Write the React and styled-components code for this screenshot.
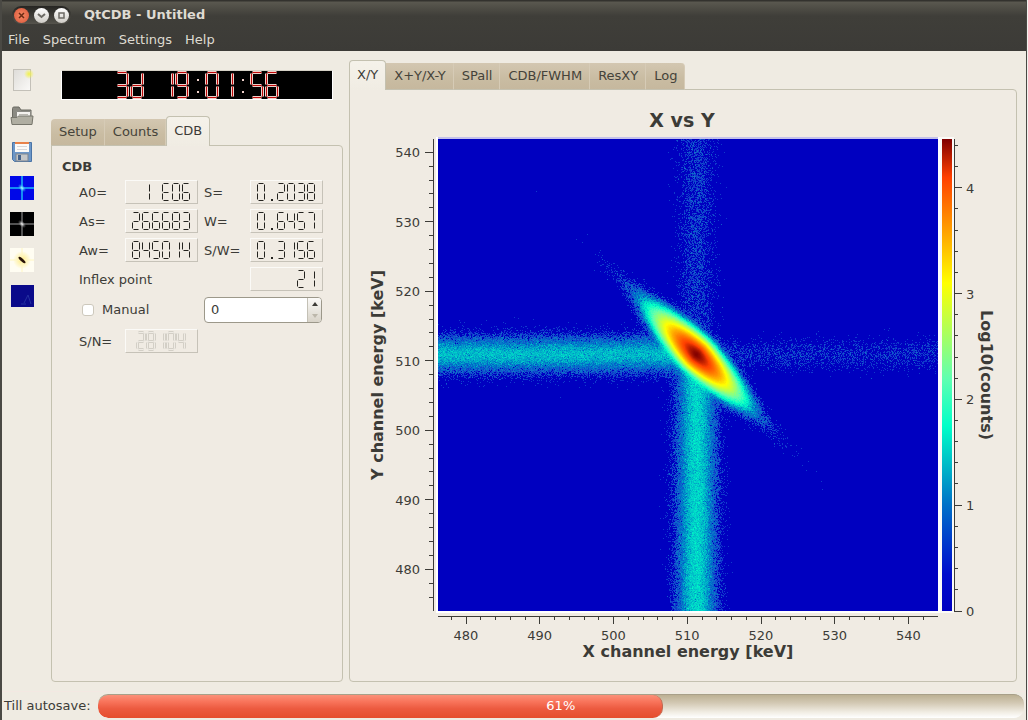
import React, { useEffect, useRef } from "react";
import styled, { createGlobalStyle, css } from "styled-components";

const ink = "#3c3b37";
const panelLine = "#c4c1b0";

const GlobalStyle = createGlobalStyle`
  * { box-sizing: border-box; }
  body {
    margin: 0;
    background: #f4f2ee;
    color: ${ink};
    font: 13px/16px "DejaVu Sans", sans-serif;
  }
  button, input { font: inherit; color: inherit; }
`;

/* ---------- window frame ---------- */

const Window = styled.div`
  min-height: 100vh;
  margin-right: 1px;
  display: flex;
  flex-direction: column;
  background: #efebe2;
  border: 1px solid #4a4944;
  border-width: 0 1px 0 2px;
`;

const Header = styled.header`
  background: linear-gradient(#33322e 0, #33322e 1px, #5a584f 2px, #3f3e39 16px, #3c3b37 100%);
  color: #dfdbd2;
  height: 51px;
  padding-top: 3px;
`;

const TitleBar = styled.div`
  display: flex;
  align-items: center;
  gap: 13px;
  height: 24px;
  padding-left: 10px;
`;

const WindowButtons = styled.div`
  display: flex;
  align-items: center;
  gap: 5px;
  height: 18px;
  padding: 0 2px;
  border-radius: 9px;
  background: linear-gradient(#262522, #55534c);
`;

const WindowButton = styled.button`
  width: 15px;
  height: 15px;
  padding: 0;
  display: grid;
  place-items: center;
  border: 0;
  border-radius: 50%;
  background: ${(p) => (p.$close ? "radial-gradient(#f68a64, #d9553a)" : "linear-gradient(#ffffff, #cfccc6)")};
`;

const Title = styled.h1`
  margin: 0;
  font-size: 13px;
  line-height: 16px;
`;

const MenuBar = styled.nav`
  display: flex;
  gap: 13px;
  padding: 5px 6px;
`;

const MenuButton = styled.button`
  padding: 0;
  border: 0;
  background: none;
  line-height: 16px;
`;

const Body = styled.main`
  flex: 1;
  display: flex;
  padding: 9px 9px 9px 0;
`;

/* ---------- tool bar ---------- */

const ToolBar = styled.div`
  flex: 0 0 49px;
  display: flex;
  flex-direction: column;
  gap: 12px;
  padding: 8px 0 0 8px;
`;

const ToolButton = styled.button`
  width: 24px;
  height: 24px;
  padding: 0;
  border: 0;
  background: none;
  svg { display: block; }
`;

/* ---------- tabs and panels ---------- */

const Column = styled.section`
  display: flex;
  flex-direction: column;
  flex: ${(p) => (p.$wide ? "1" : "0 0 292px")};
  margin-left: ${(p) => (p.$wide ? "6px" : "0")};
  min-width: 0;
`;

const TabBar = styled.div`
  display: flex;
  align-items: flex-end;
  height: 30px;
  position: relative;
  margin-bottom: -1px;
`;

const Tab = styled.button`
  height: 27px;
  padding: 0 7px 0 8px;
  border: 0;
  border-right: 1px solid #d6cbb6;
  background: linear-gradient(#d3c7b1, #c9bca2 60%, #c6b89e);
  border-bottom: 1px solid ${panelLine};
  color: #45433a;
  white-space: nowrap;
  &:first-child { border-top-left-radius: 4px; }
  &:last-child { border-top-right-radius: 4px; }
  ${(p) =>
    p.$active &&
    css`
      height: 30px;
      border: 1px solid ${panelLine};
      border-bottom: 0;
      border-radius: 4px 4px 0 0;
      padding: 0 7px 1px;
      background: linear-gradient(#f5f2ea, #f0ece3);
      color: ${ink};
    `}
`;

const Panel = styled.div`
  flex: 1;
  border: 1px solid ${panelLine};
  border-radius: 0 4px 4px 4px;
  background: #f0ebe3;
`;

/* ---------- left panel ---------- */

const Clock = styled.div`
  display: grid;
  place-items: center;
  height: 30px;
  margin: 10px 10px 16px;
  background: #000;
  border: 1px solid #fff;
  border-top-color: #d5d1c6;
`;

const Form = styled.form`
  padding: 12px 10px;
`;

const GroupTitle = styled.h2`
  margin: 0 0 5px;
  padding-top: 1px;
  font-size: 13px;
  line-height: 16px;
`;

const Fields = styled.div`
  display: grid;
  grid-template-columns: 40px 73px 40px 73px;
  grid-auto-rows: minmax(24px, auto);
  align-items: center;
  gap: 5px 6px;
  padding-left: 17px;
`;

const Label = styled.span`
  grid-column: span ${(p) => p.$span || 1};
  padding-top: 2px;
  white-space: nowrap;
`;

const Readout = styled.output`
  display: grid;
  place-items: center;
  height: 24px;
  border: 1px solid;
  border-color: #fbfaf7 #c6c2b8 #c6c2b8 #fbfaf7;
`;

const CheckLabel = styled.label`
  grid-column: span 2;
  display: flex;
  align-items: center;
  gap: 8px;
  height: 28px;
  padding-left: 3px;
`;

const CheckBox = styled.input`
  appearance: none;
  width: 12px;
  height: 12px;
  margin: 0;
  border: 1px solid #cdc8bc;
  border-radius: 3px;
  background: #fff;
`;

const Spin = styled.div`
  grid-column: span 2;
  display: flex;
  width: 118px;
  height: 26px;
  border: 1px solid #9c988a;
  border-radius: 4px;
  background: #fff;
  overflow: hidden;
`;

const SpinInput = styled.input`
  flex: 1;
  min-width: 0;
  padding: 0 6px;
  border: 0;
  background: none;
`;

const SpinButtons = styled.div`
  display: grid;
  grid-template-rows: 1fr 1fr;
  width: 14px;
  border-left: 1px solid #c4c1b6;
  background: linear-gradient(#fbfaf8, #d8d3c8);
`;

const SpinButton = styled.button`
  display: grid;
  place-items: center;
  padding: 0;
  border: 0;
  background: none;
  color: ${(p) => (p.disabled ? "#bcb7ab" : ink)};
`;

/* ---------- chart ---------- */

const Chart = styled.figure`
  height: 100%;
  margin: 0;
  padding: 18px 20px 19px 18px;
  display: grid;
  grid-template-columns: 20px 50px minmax(0, 1fr) 16px 24px 18px;
  grid-template-rows: 31px minmax(300px, 1fr) 31px 20px;
  grid-template-areas:
    ".      .     title .     .     ."
    "ytitle yaxis plot  bar   zaxis ztitle"
    ".      .     xaxis .     .     ."
    ".      .     xtitle .    .     .";
`;

const ChartTitle = styled.figcaption`
  grid-area: title;
  text-align: center;
  font-size: 19px;
  line-height: 24px;
  font-weight: bold;
  padding-right: 12px;
`;

const AxisTitle = styled.div`
  grid-area: ${(p) => p.$area};
  font-size: 16px;
  line-height: 20px;
  font-weight: bold;
  text-align: center;
  white-space: nowrap;
  ${(p) => p.$area !== "xtitle" && css`writing-mode: vertical-rl;`}
  ${(p) => p.$area === "ytitle" && css`transform: rotate(180deg);`}
`;

const Axis = styled.svg`
  grid-area: ${(p) => p.$area};
  width: 100%;
  height: 100%;
  overflow: visible;
  line { stroke: ${ink}; stroke-width: 1; shape-rendering: crispEdges; }
  text { fill: ${ink}; font: 13px "DejaVu Sans", sans-serif; }
`;

const Heatmap = styled.canvas`
  grid-area: plot;
  display: block;
  width: 100%;
  height: 100%;
  contain: size;
  box-shadow: 0 -2px 0 #c3c0ea, 0 0 0 2px #fff;
`;

const ColorBar = styled.div`
  grid-area: bar;
  margin: 0 2px 0 4px;
  box-shadow: 0 0 0 2px #fbfaf7;
  background: ${(p) => p.$fill};
`;

/* ---------- footer ---------- */

const Footer = styled.footer`
  display: flex;
  align-items: center;
  gap: 7px;
  height: 30px;
  padding: 0 2px 2px;
  border-top: 1px solid #f3e8e2;
`;

const Progress = styled.div`
  flex: 1;
  display: grid;
  height: 24px;
  border-radius: 10px;
  overflow: hidden;
  border-top: 1px solid #a89f89;
  background: linear-gradient(#bcb093, #d3c9b4 35%, #f1ede4 75%, #fff);
`;

const ProgressFill = styled.div`
  grid-area: 1 / 1;
  border-radius: 10px;
  border-right: 1px solid #c06a50;
  background: linear-gradient(#fb9079, #f8735a 30%, #ec5a3f 60%, #e54d2d);
`;

const ProgressText = styled.span`
  grid-area: 1 / 1;
  place-self: center;
  color: #fff;
`;

/* ---------- seven segment display ---------- */

const SEGMENTS = {
  0: "abcdef", 1: "bc", 2: "abged", 3: "abgcd", 4: "fgbc", 5: "afgcd",
  6: "afgedc", 7: "abc", 8: "abcdefg", 9: "abcdfg", d: "bcdeg", E: "afged",
};

function segmentLine(name, w, h) {
  const m = Math.round(h / 2);
  return {
    a: [1, 0, w - 1, 0],
    b: [w, 1, w, m - 1],
    c: [w, m + 1, w, h - 1],
    d: [1, h, w - 1, h],
    e: [0, m + 1, 0, h - 1],
    f: [0, 1, 0, m - 1],
    g: [1, m, w - 1, m],
  }[name];
}

function Lcd({ value, width, height, pitch, color, outline }) {
  const cells = value.split("");
  const lines = [];
  const dots = [];
  const pad = 1.5;
  cells.forEach((ch, i) => {
    const x = i * pitch + pad;
    const mid = i * pitch + Math.round(width / 2) + 1;
    if (ch === ":") {
      dots.push([mid, Math.round(height * 0.3)], [mid, Math.round(height * 0.8)]);
    } else if (ch === ".") {
      dots.push([mid, height]);
    } else {
      (SEGMENTS[ch] || "").split("").forEach((s) => {
        const [x1, y1, x2, y2] = segmentLine(s, width, height);
        lines.push({ x1: x + x1, y1: y1 + pad, x2: x + x2, y2: y2 + pad });
      });
    }
  });
  return (
    <svg
      width={(cells.length - 1) * pitch + width + 4}
      height={height + 3}
      role="img"
      aria-label={value.trim()}
    >
      {outline && lines.map((l, i) => (
        <line key={i} {...l} stroke={outline} strokeWidth="3" />
      ))}
      {lines.map((l, i) => <line key={`s${i}`} {...l} stroke={color} strokeWidth="1" />)}
      {dots.map(([x, y], i) => (
        <rect key={`d${i}`} x={x} y={y} width="2" height="2" fill={outline || color} />
      ))}
    </svg>
  );
}

function SmallLcd({ value, dim }) {
  return (
    <Readout>
      <Lcd
        value={value}
        width={7}
        height={17}
        pitch={10}
        color={dim ? "#efebe4" : "#24231f"}
        outline={dim ? "#d3cfc6" : undefined}
      />
    </Readout>
  );
}

/* ---------- tool icons ---------- */

const NewIcon = () => (
  <svg width="24" height="24">
    <defs>
      <radialGradient id="spark"><stop offset="0" stopColor="#f2f24a" /><stop offset="1" stopColor="#f2f24a" stopOpacity="0" /></radialGradient>
      <linearGradient id="sheet" x2="1" y2="1"><stop offset="0" stopColor="#dedcd8" /><stop offset="1" stopColor="#fbfaf8" /></linearGradient>
    </defs>
    <rect x="3.5" y="1.5" width="17" height="21" fill="url(#sheet)" stroke="#c3c0b8" />
    <circle cx="19" cy="6" r="5" fill="url(#spark)" />
  </svg>
);

const OpenIcon = () => (
  <svg width="24" height="24">
    <path d="M2.500 15V4.500q0-1.500 1.500-1.500h5l2 3h10v9z" fill="#8b8a82" stroke="#6b6a62" />
    <path d="M6.500 15V7.500h14V15z" fill="#f4f2ee" stroke="#8b8a84" />
    <path d="M9 10.500h9" stroke="#b9b7b0" />
    <path d="M1 13.500h6l1.500-1.500h14.500l-1 8.500h-20z" fill="#b0aea2" stroke="#77766c" />
  </svg>
);

const SaveIcon = () => (
  <svg width="24" height="24">
    <path d="M2.500 2.500h19v19h-17l-2-2z" fill="#6c97c8" stroke="#4a74a6" />
    <rect x="5" y="2" width="14" height="10" fill="#fbfaf8" />
    <rect x="5" y="2" width="14" height="2" fill="#e8824a" />
    <path d="M7 6.500h10M7 9.500h10" stroke="#d8d8d8" />
    <rect x="6" y="14" width="12" height="7" fill="#c3c6c8" stroke="#7d8590" />
    <rect x="8" y="15" width="3" height="5" fill="#46648c" />
  </svg>
);

const CrossIcon = ({ id, back, arm, core }) => (
  <svg width="24" height="24">
    <defs><radialGradient id={id}><stop offset="0" stopColor={core} /><stop offset="1" stopColor={arm} stopOpacity="0" /></radialGradient></defs>
    <rect width="24" height="24" fill={back} />
    <path d="M12 0V24M0 12H24" stroke={arm} strokeWidth="1.500" />
    <ellipse cx="12" cy="12" rx="5" ry="3" transform="rotate(45 12 12)" fill={`url(#${id})`} />
  </svg>
);

const SpotIcon = () => (
  <svg width="24" height="24">
    <defs><radialGradient id="glow"><stop offset="0" stopColor="#ffec80" /><stop offset="1" stopColor="#fffdf2" /></radialGradient></defs>
    <rect width="24" height="24" fill="#fffdf2" />
    <circle cx="12" cy="12" r="9" fill="url(#glow)" />
    <path d="M12 0V24M0 12H24" stroke="#fff6c0" />
    <ellipse cx="12" cy="12" rx="4.500" ry="1.500" transform="rotate(42 12 12)" fill="#2a1408" />
  </svg>
);

const DarkIcon = () => (
  <svg width="24" height="24">
    <rect x="1" y="1" width="23" height="22" fill="#0a0a8a" />
    <path d="M14 19l4-8 3 9M11 20h5" stroke="#2430a0" fill="none" />
  </svg>
);

const TOOLS = [
  ["New", <NewIcon />],
  ["Open", <OpenIcon />],
  ["Save", <SaveIcon />],
  ["Jet colours", <CrossIcon id="jet" back="#0008e8" arm="#1cb8f8" core="#b8f8ff" />],
  ["Gray colours", <CrossIcon id="gray" back="#000" arm="#6c6c6c" core="#fff" />],
  ["Hot colours", <SpotIcon />],
  ["Blue colours", <DarkIcon />],
];

/* ---------- spectrum data ---------- */

const X_RANGE = [476.2, 544];
const Y_RANGE = [474, 541.9];
const Z_MAX = 4.46;

const STOPS = [
  [0, 0, 0, 192], [0.35, 0, 12, 204], [0.6, 0, 50, 204], [1, 0, 112, 200],
  [1.4, 0, 190, 200], [1.75, 0, 255, 200], [2.2, 96, 255, 176],
  [3.1, 255, 255, 0], [4.1, 255, 64, 0], [4.46, 128, 0, 0],
];

const BAR_FILL = `linear-gradient(to top, ${STOPS.map(
  ([v, r, g, b]) => `rgb(${r},${g},${b}) ${((v / Z_MAX) * 100).toFixed(1)}%`
).join(", ")})`;

function colorOf(v) {
  for (let i = 1; i < STOPS.length; i++) {
    if (v <= STOPS[i][0]) {
      const lo = STOPS[i - 1];
      const hi = STOPS[i];
      const t = (v - lo[0]) / (hi[0] - lo[0]);
      return [1, 2, 3].map((k) => lo[k] + (hi[k] - lo[k]) * t);
    }
  }
  return [128, 0, 0];
}

function makeRandom(seed) {
  let s = seed;
  return () => {
    s = (s + 0x6d2b79f5) | 0;
    let t = Math.imul(s ^ (s >>> 15), 1 | s);
    t = (t + Math.imul(t ^ (t >>> 7), 61 | t)) ^ t;
    return ((t ^ (t >>> 14)) >>> 0) / 4294967296;
  };
}

function poisson(mean, rnd) {
  if (mean > 30) {
    const n = Math.sqrt(-2 * Math.log(rnd() + 1e-9)) * Math.cos(2 * Math.PI * rnd());
    return Math.max(0, mean + n * Math.sqrt(mean));
  }
  const limit = Math.exp(-mean);
  let k = 0;
  let p = rnd();
  while (p > limit) {
    k += 1;
    p *= rnd();
  }
  return k;
}

const bell = (d, s) => Math.exp((-d * d) / (2 * s * s));

function drawSpectrum(canvas) {
  const { width, height } = canvas;
  const ctx = canvas.getContext("2d");
  const image = ctx.createImageData(width, height);
  const rnd = makeRandom(19);
  const cx = 258;
  const cy = 215;
  for (let y = 0; y < height; y++) {
    for (let x = 0; x < width; x++) {
      const dx = x - cx;
      const dy = y - cy;
      const u = Math.abs(dx + dy) / Math.SQRT2;
      const v = (dx - dy) / Math.SQRT2;
      const peak = Math.pow(10, 4.15 - Math.pow(u, 1.5) / 200 - (v * v) / 145);
      const tail = Math.pow(10, 3.2 - u * 0.032 - (v * v) / 75);
      const left = 13 * bell(dy, 8.5) / (1 + Math.exp(dx / 6));
      const right = 0.55 * bell(dy, 8) / (1 + Math.exp(-dx / 6));
      const down = 18 * bell(dx, 9) / (1 + Math.exp(-dy / 6));
      const up = 0.9 * bell(dx, 9) / (1 + Math.exp(dy / 6));
      const n = poisson(peak + tail + left + right + down + up, rnd);
      const c = colorOf(Math.log10(1 + 1.8 * n));
      const i = (y * width + x) * 4;
      const sparse = n > 0 && n < 4 ? 32 : 0;
      image.data[i] = c[0] + sparse / 2;
      image.data[i + 1] = c[1] + sparse;
      image.data[i + 2] = c[2];
      image.data[i + 3] = 255;
    }
  }
  ctx.putImageData(image, 0, 0);
}

function Spectrum() {
  const ref = useRef(null);
  useEffect(() => drawSpectrum(ref.current), []);
  return <Heatmap ref={ref} width="500" height="472" role="img" aria-label="X vs Y spectrum" />;
}

/* ---------- axes ---------- */

const range = (from, to, step) => {
  const out = [];
  for (let v = from; v <= to + 1e-6; v += step) out.push(Math.round(v * 10) / 10);
  return out;
};

const share = (v, [lo, hi]) => `${(((v - lo) / (hi - lo)) * 100).toFixed(2)}%`;
const fall = (v, [lo, hi]) => `${(((hi - v) / (hi - lo)) * 100).toFixed(2)}%`;

const YAxis = () => (
  <Axis $area="yaxis">
    <line x1="45" x2="45" y1="0" y2="100%" />
    {range(476, 540, 2).map((v) => (
      <line key={v} x1={v % 10 ? 41 : 37} x2="45" y1={fall(v, Y_RANGE)} y2={fall(v, Y_RANGE)} />
    ))}
    {range(480, 540, 10).map((v) => (
      <text key={v} x="32" y={fall(v, Y_RANGE)} dy="5" textAnchor="end">{v}</text>
    ))}
  </Axis>
);

const XAxis = () => (
  <Axis $area="xaxis">
    <line x1="0" x2="100%" y1="5" y2="5" />
    {range(478, 542, 2).map((v) => (
      <line key={v} x1={share(v, X_RANGE)} x2={share(v, X_RANGE)} y1="5" y2={v % 10 ? 9 : 13} />
    ))}
    {range(480, 540, 10).map((v) => (
      <text key={v} x={share(v, X_RANGE)} y="29" textAnchor="middle">{v}</text>
    ))}
  </Axis>
);

const ZAxis = () => (
  <Axis $area="zaxis">
    <line x1="0" x2="0" y1="0" y2="100%" />
    {range(0, 4.4, 0.2).map((v) => (
      <line key={v} x1="0" x2={v % 1 ? 4 : 8} y1={fall(v, [0, Z_MAX])} y2={fall(v, [0, Z_MAX])} />
    ))}
    {range(0, 4, 1).map((v) => (
      <text key={v} x="12" y={fall(v, [0, Z_MAX])} dy="5">{v}</text>
    ))}
  </Axis>
);

function Tabs({ names, active }) {
  return (
    <TabBar role="tablist">
      {names.map((n) => (
        <Tab key={n} type="button" role="tab" aria-selected={n === active} $active={n === active}>
          {n}
        </Tab>
      ))}
    </TabBar>
  );
}

const AUTOSAVE = 61;

export default function App() {
  return (
    <Window>
      <GlobalStyle />
      <Header>
        <TitleBar>
          <WindowButtons>
            <WindowButton $close aria-label="Close">
              <svg width="9" height="9"><path d="M2 2l5 5M7 2l-5 5" stroke="#6a2a14" strokeWidth="1.500" /></svg>
            </WindowButton>
            <WindowButton aria-label="Minimize">
              <svg width="9" height="9"><path d="M1 3l3.500 3L8 3" stroke="#6c6a64" strokeWidth="2" fill="none" /></svg>
            </WindowButton>
            <WindowButton aria-label="Maximize">
              <svg width="9" height="9"><rect x="2" y="2" width="5" height="5" stroke="#6c6a64" strokeWidth="1.500" fill="none" /></svg>
            </WindowButton>
          </WindowButtons>
          <Title>QtCDB - Untitled</Title>
        </TitleBar>
        <MenuBar>
          {["File", "Spectrum", "Settings", "Help"].map((m) => (
            <MenuButton key={m} type="button">{m}</MenuButton>
          ))}
        </MenuBar>
      </Header>

      <Body>
        <ToolBar role="toolbar">
          {TOOLS.map(([name, icon]) => (
            <ToolButton key={name} type="button" aria-label={name}>{icon}</ToolButton>
          ))}
        </ToolBar>

        <Column>
          <Clock>
            <Lcd value="3d 19:01:56" width={11} height={25} pitch={15} color="#c00808" outline="#eed0ca" />
          </Clock>
          <Tabs names={["Setup", "Counts", "CDB"]} active="CDB" />
          <Panel>
            <Form onSubmit={(e) => e.preventDefault()}>
              <GroupTitle>CDB</GroupTitle>
              <Fields>
                <Label>A0=</Label><SmallLcd value=" 1 E06" />
                <Label>S=</Label><SmallLcd value="0.2038" />
                <Label>As=</Label><SmallLcd value="266683" />
                <Label>W=</Label><SmallLcd value="0.6457" />
                <Label>Aw=</Label><SmallLcd value="845014" />
                <Label>S/W=</Label><SmallLcd value="0.3156" />
                <Label $span={3}>Inflex point</Label><SmallLcd value="    21" />
                <CheckLabel><CheckBox type="checkbox" />Manual</CheckLabel>
                <Spin>
                  <SpinInput type="text" inputMode="numeric" aria-label="Manual inflex point" defaultValue="0" />
                  <SpinButtons>
                    <SpinButton type="button" aria-label="Increase">
                      <svg width="6" height="4"><path d="M0 4l3-4 3 4z" fill="currentColor" /></svg>
                    </SpinButton>
                    <SpinButton type="button" aria-label="Decrease" disabled>
                      <svg width="6" height="4"><path d="M0 0l3 4 3-4z" fill="currentColor" /></svg>
                    </SpinButton>
                  </SpinButtons>
                </Spin>
                <Label>S/N=</Label><SmallLcd value="28104" dim />
              </Fields>
            </Form>
          </Panel>
        </Column>

        <Column $wide>
          <Tabs names={["X/Y", "X+Y/X-Y", "SPall", "CDB/FWHM", "ResXY", "Log"]} active="X/Y" />
          <Panel>
            <Chart>
              <ChartTitle>X vs Y</ChartTitle>
              <AxisTitle $area="ytitle">Y channel energy [keV]</AxisTitle>
              <YAxis />
              <Spectrum />
              <ColorBar $fill={BAR_FILL} />
              <ZAxis />
              <AxisTitle $area="ztitle">Log10(counts)</AxisTitle>
              <XAxis />
              <AxisTitle $area="xtitle">X channel energy [keV]</AxisTitle>
            </Chart>
          </Panel>
        </Column>
      </Body>

      <Footer>
        <span id="autosave">Till autosave:</span>
        <Progress role="progressbar" aria-labelledby="autosave" aria-valuenow={AUTOSAVE}>
          <ProgressFill style={{ width: `${AUTOSAVE}%` }} />
          <ProgressText>{AUTOSAVE}%</ProgressText>
        </Progress>
      </Footer>
    </Window>
  );
}
